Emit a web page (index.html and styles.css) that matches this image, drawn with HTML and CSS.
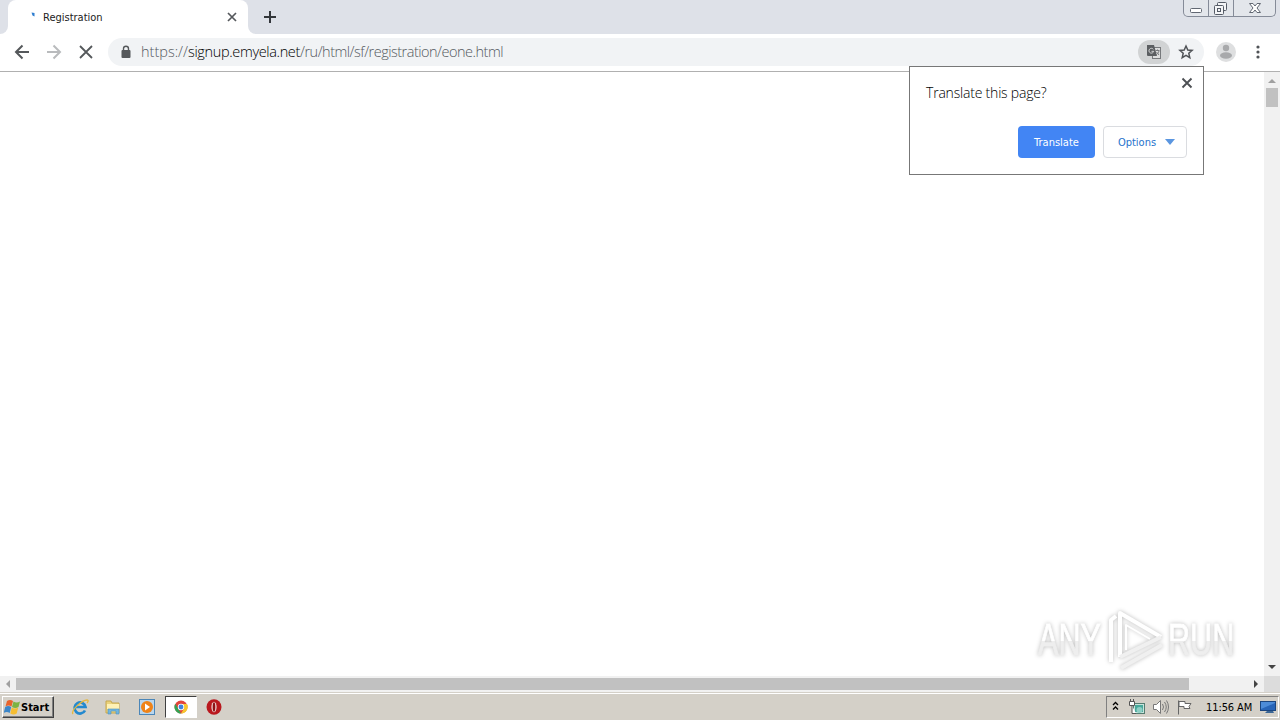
FILE: index.html
```html
<!DOCTYPE html>
<html>
<head>
  <meta charset="utf-8">
  <title>Registration</title>
  <link rel="stylesheet" href="styles.css">
</head>
<body>
  <div class="tabs">
    <div class="tab-edge"><div class="curve left"></div></div>
    <div class="tab">
      <svg class="spinner" width="16" height="16"><path d="M7.500 3.500l3 .5v3.500l-2-1z" fill="#2f7ed0"/></svg>
      <span class="tab-title">Registration</span>
      <svg width="16" height="16" stroke="#55585c" stroke-width="1.700"><path d="M4 4l8 8M12 4l-8 8"/></svg>
    </div>
    <div class="tab-edge"><div class="curve"></div></div>
    <svg class="new-tab" width="16" height="16" stroke="#33363b" stroke-width="2"><path d="M8 2v12M2 8h12"/></svg>
    <div class="win-btns">
      <svg width="24" height="16" fill="#fff" stroke="#626873"><rect x="6.500" y="8.500" width="11" height="4" rx="1"/></svg>
      <svg width="24" height="16" fill="#f4f5f7" stroke="#555b66"><rect x="8.500" y="2.500" width="9" height="8" rx="1"/><rect x="5.500" y="5.500" width="9" height="9" rx="1"/><rect x="8.500" y="8.500" width="3" height="3"/></svg>
      <svg width="41" height="16" fill="#fff" stroke="#626873"><path d="M15.500 3.500H19l2 2.500 2-2.500h3.500L23 8l3.500 4.500H23L21 10l-2 2.500h-3.500L19 8z"/></svg>
    </div>
  </div>

  <div class="toolbar">
    <svg width="32" height="32" fill="none" stroke="#55585b" stroke-width="2"><path d="M29 16H16M22.500 9.500L16 16l6.500 6.500"/></svg>
    <svg width="32" height="32" fill="none" stroke="#b9bbbd" stroke-width="2"><path d="M15 16h13M21.500 9.500L28 16l-6.500 6.500"/></svg>
    <svg width="32" height="32" fill="none" stroke="#55585b" stroke-width="1.800"><path d="M16 10l12 12M28 10L16 22"/></svg>
    <div class="address">
      <svg class="lock" width="12" height="14"><rect x="1.500" y="5" width="9" height="8" rx="1" fill="#55585b"/><path d="M3.500 6V3.700a2.500 2.500 0 0 1 5 0V6" fill="none" stroke="#55585b" stroke-width="1.400"/></svg>
      <div class="url"><span class="scheme">https://</span><span class="host">signup.emyela.net</span><span class="path">/ru/html/sf/registration/eone.html</span></div>
      <div class="translate-icon">
        <svg width="16" height="16"><rect x="6.500" y="3.500" width="8" height="11" fill="#dcdddd" stroke="#77797c"/><path d="M1 1h7l3 11H2a1 1 0 0 1-1-1z" fill="#5b5e61"/><path d="M7.300 5.300a2.400 2.400 0 1 0 .4 2H5.500" fill="none" stroke="#d5d6d7"/><path d="M9.500 6.500h4M11.500 5.500v1M13 7c-.5 2-1.500 3-3 4M10.500 8l2.500 3" fill="none" stroke="#77797c"/></svg>
      </div>
      <svg class="star" width="16" height="16" fill="none" stroke="#505357" stroke-width="1.500"><path d="M8 2l1.800 4 4.300.4-3.300 2.900 1 4.300L8 11.300l-3.800 2.300 1-4.300L1.900 6.400 6.200 6z"/></svg>
    </div>
    <svg class="avatar" width="20" height="20"><circle cx="10" cy="10" r="10" fill="#dedfe0"/><circle cx="10" cy="6" r="3.200" fill="#a8a9ab"/><ellipse cx="10" cy="13.500" rx="6" ry="3.300" fill="#a8a9ab"/></svg>
    <svg class="dots" width="4" height="14" fill="#505357"><circle cx="2" cy="2" r="1.600"/><circle cx="2" cy="7" r="1.600"/><circle cx="2" cy="12" r="1.600"/></svg>
  </div>

  <div class="content">
    <div class="page"></div>
    <div class="vscroll">
      <svg width="16" height="16"><path d="M4 11l4-4 4 4z" fill="#a0a0a0"/></svg>
      <div class="vthumb"></div>
      <svg class="down" width="16" height="16"><path d="M4 5h8l-4 4z" fill="#444"/></svg>
    </div>
  </div>
  <div class="hscroll">
    <svg width="16" height="16"><path d="M10 4v8L6 8z" fill="#a0a0a0"/></svg>
    <div class="hthumb"></div>
    <svg class="right" width="16" height="16"><path d="M6 4v8l4-4z" fill="#444"/></svg>
    <div class="corner"></div>
  </div>

  <div class="taskbar">
    <div class="start">
      <svg width="17" height="17"><path d="M3 2q3-2 6 0L7.500 7.500q-3-2-6 0z" fill="#e8632b"/><path d="M9.500 2.500q3 2 6.500 0L14.500 8q-3 2-6.500 0z" fill="#7cb342"/><path d="M1.200 8q3-2 6 0L5.700 14q-3-2-6 0z" fill="#3c86c8"/><path d="M7.800 8.500q3 2 6.400 0l-1.500 6q-3 2-6.400 0z" fill="#f5bd31"/></svg>
      <span>Start</span>
    </div>
    <div class="launch ie">
      <svg width="18" height="18" fill="none"><path d="M14 12.500a5.500 5.500 0 1 1 .5-3.500H5" stroke="#2389cf" stroke-width="2.700"/><path d="M2 16C-1 13 11 2 16 2c2 0 1 2 0 3" stroke="#e7b83c" stroke-width="1.300"/></svg>
    </div>
    <div class="launch">
      <svg width="18" height="18"><path d="M2 3h5l1 2h7v10H2z" fill="#ead27c" stroke="#c6a74e"/><path d="M3 6h12v5H3z" fill="#fff1b5"/><path d="M4 16v-5h11v5h-3v-3H7v3z" fill="#72b6df" stroke="#4b91bf" stroke-width=".6"/></svg>
    </div>
    <div class="launch">
      <svg width="18" height="18"><rect x="1.500" y="1.500" width="15" height="15" fill="#b9d6ed" stroke="#4b86b8"/><circle cx="9" cy="9" r="6" fill="#ef8318"/><path d="M7 5.500l5 3.500-5 3.500z" fill="#fff"/></svg>
    </div>
    <div class="launch active">
      <svg width="14" height="14"><circle cx="7" cy="7" r="6.500" fill="#e2453b"/><path d="M1.300 3.800L7 13.500A6.500 6.500 0 0 1 1.300 3.800z" fill="#31a354"/><path d="M7 13.500l3-5L7 4h6a6.500 6.500 0 0 1-6 9.500z" fill="#f6c72e"/><circle cx="7" cy="7" r="3.200" fill="#fff"/><circle cx="7" cy="7" r="2.400" fill="#3e82df"/></svg>
    </div>
    <div class="launch opera">
      <svg width="16" height="16"><ellipse cx="8" cy="8" rx="7.500" ry="7.800" fill="#b9181e"/><ellipse cx="8" cy="8" rx="2.600" ry="5.300" fill="#eed6d4"/><ellipse cx="8" cy="8" rx="1.300" ry="4.700" fill="#8e1116"/></svg>
    </div>
    <div class="tray">
      <svg class="chevron" width="7" height="10" fill="none" stroke="#000" stroke-width="1.300"><path d="M1 4l2.500-2.500L6 4M1 8.500L3.500 6 6 8.500"/></svg>
      <svg class="net" width="18" height="18"><rect x="5.500" y="5.500" width="11" height="10" fill="#c8e4dc" stroke="#547c70"/><rect x="7" y="7" width="8" height="7" fill="#48a99b"/><path d="M1.500 3.500h5v4h-5zM4 7.500v8h4M2.500 1v2M5.500 1v2" fill="#fff" stroke="#555"/><circle cx="11.500" cy="12" r="3" fill="#8fcfc5"/></svg>
      <svg class="sound" width="18" height="16" fill="none" stroke="#777"><path d="M1.500 5.500h3l4-4v13l-4-4h-3z" fill="#fff"/><path d="M10.500 5q2 3 0 6M12.500 3q3.500 5 0 10M14.500 1.500q4 6.500 0 13"/></svg>
      <svg class="flag" width="17" height="16" fill="#fff" stroke="#666"><path d="M2.500 15.500v-14M3 2.500h6v2h6l-2 3 1 2H8v-2H3z"/></svg>
      <span class="clock">11:56 AM</span>
      <svg class="desktop" width="16" height="14"><rect x=".5" y="1.500" width="15" height="9" fill="#2865b8" stroke="#1c467f"/><path d="M1 9L15 3V2H1z" fill="#4d8cd8"/><path d="M5 13h9l-1-2H7z" fill="#3b6695"/></svg>
    </div>
  </div>

  <div class="bubble">
    <svg class="bubble-close" width="12" height="12" stroke="#4d5054" stroke-width="1.900"><path d="M1.500 1.500l9 9M10.500 1.500l-9 9"/></svg>
    <div class="bubble-title">Translate this page?</div>
    <div class="bubble-btns">
      <div class="btn primary">Translate</div>
      <div class="btn options"><span>Options</span><svg width="10" height="6"><path d="M0 0h10L5 6z" fill="#5a96e0"/></svg></div>
    </div>
  </div>

  <div class="watermark">
    <span>ANY</span>
    <svg width="58" height="64" fill="none" stroke="#fff" stroke-width="4" stroke-linejoin="round">
      <path d="M5 54V12l5-4M14 49V5l41 24"/>
      <path d="M14 49l41-20M15 60l41-23" stroke="#f0f0f0"/>
      <path d="M20 42V17l24 14" stroke-width="2"/>
    </svg>
    <span class="run">RUN</span>
  </div>
</body>
</html>
```
FILE: styles.css
```css
body {
  margin: 0;
  width: 1280px;
  height: 720px;
  overflow: hidden;
  display: flex;
  flex-direction: column;
  background: #fff;
  font-family: "DejaVu Sans Condensed", "DejaVu Sans", sans-serif;
  font-stretch: condensed;
  font-size: 11px;
  color: #222;
}
svg {
  display: block;
  flex-shrink: 0;
}
.tabs {
  height: 34px;
  flex-shrink: 0;
  display: flex;
  background: #dee1e8;
}
.tab-edge {
  width: 8px;
  align-self: flex-end;
  background: #fff;
}
.curve {
  height: 8px;
  background: #dee1e8;
  border-bottom-left-radius: 8px;
}
.curve.left {
  border-radius: 0 0 8px 0;
}
.tab {
  width: 216px;
  padding: 0 8px 0 16px;
  display: flex;
  align-items: center;
  background: #fff;
  border-radius: 8px 8px 0 0;
}
.tab-title {
  flex: 1;
  margin-left: 3px;
}
.new-tab {
  margin: 9px 0 0 6px;
}
.win-btns {
  height: 16px;
  margin: 0 4px 0 auto;
  display: flex;
  border: 1px solid #858b98;
  border-top: 0;
  border-radius: 0 0 5px 5px;
  background: #e3e6eb;
}
.win-btns svg + svg {
  border-left: 1px solid #858b98;
}
.toolbar {
  height: 37px;
  flex-shrink: 0;
  display: flex;
  align-items: center;
  border-bottom: 1px solid #b0b0b0;
}
.toolbar > * {
  margin-bottom: 1px;
}
.address {
  width: 1096px;
  height: 28px;
  margin-left: 12px;
  display: flex;
  align-items: center;
  border-radius: 14px;
  background: #f1f3f5;
}
.lock {
  margin-left: 12px;
}
.url {
  flex: 1;
  margin: 0 0 2px 9px;
  font-family: "Open Sans", "Noto Sans", sans-serif;
  font-stretch: normal;
  font-weight: 300;
  font-size: 14.500px;
  white-space: nowrap;
  color: #555a5f;
}
.host {
  color: #000;
  letter-spacing: -0.350px;
}
.path {
  letter-spacing: -0.500px;
}
.translate-icon {
  width: 32px;
  height: 24px;
  display: flex;
  align-items: center;
  justify-content: center;
  border-radius: 12px;
  background: #d1d3d4;
}
.star {
  margin: 0 10px 0 8px;
}
.avatar {
  margin-left: 12px;
}
.dots {
  margin-left: 20px;
}
.content {
  flex: 1;
  display: flex;
}
.page {
  flex: 1;
}
.vscroll {
  width: 16px;
  display: flex;
  flex-direction: column;
  background: #f1f1f1;
}
.vthumb {
  width: 12px;
  height: 19px;
  margin: 0 2px;
  background: #c1c1c1;
}
.down {
  margin-top: auto;
}
.hscroll {
  height: 16px;
  display: flex;
  background: #f1f1f1;
}
.hthumb {
  width: 1173px;
  height: 12px;
  margin-top: 2px;
  background: #c1c1c1;
}
.right {
  margin-left: auto;
}
.corner {
  width: 16px;
  background: #dcdcdc;
}
.taskbar {
  height: 27px;
  flex-shrink: 0;
  display: flex;
  align-items: center;
  border-top: 1px solid #d4d0c8;
  box-shadow: inset 0 1px #fff;
  background: #d4d0c8;
}
.start {
  width: 50px;
  height: 20px;
  margin: 1px 0 0 2px;
  display: flex;
  align-items: center;
  border: 1px solid;
  border-color: #fff #404040 #404040 #fff;
  box-shadow: inset -1px -1px #808080;
  font-weight: bold;
  color: #000;
}
.start svg {
  margin-left: 1px;
}
.launch {
  width: 33.500px;
  height: 22px;
  margin-top: 1px;
  display: flex;
  align-items: center;
  justify-content: center;
}
.ie {
  margin-left: 9px;
}
.active {
  width: 30px;
  height: 20px;
  margin-left: 1px;
  border: 1px solid;
  border-color: #404040 #fff #fff #404040;
  background: #fff;
}
.opera {
  margin-left: 1px;
}
.tray {
  width: 171px;
  height: 20px;
  margin: 1px 1px 0 auto;
  display: flex;
  align-items: center;
  border: 1px solid;
  border-color: #808080 #fff #fff #808080;
  color: #000;
}
.chevron {
  margin: 0 0 3px 5px;
}
.net {
  margin-left: 9px;
}
.sound {
  margin-left: 6px;
}
.flag {
  margin-left: 6px;
}
.clock {
  margin-left: 13px;
  letter-spacing: -0.100px;
  white-space: nowrap;
}
.desktop {
  margin: 0 2px 0 auto;
}
.bubble {
  position: absolute;
  left: 909px;
  top: 66px;
  width: 293px;
  height: 107px;
  border: 1px solid #777;
  background: #fff;
}
.bubble-close {
  position: absolute;
  right: 10px;
  top: 10px;
}
.bubble-title {
  margin: 16px 0 0 16px;
  font-family: "Open Sans", "Noto Sans", sans-serif;
  font-stretch: normal;
  font-weight: 300;
  font-size: 14px;
  line-height: 20px;
  letter-spacing: -0.200px;
  color: #000;
}
.bubble-btns {
  margin: 23px 16px 0 0;
  display: flex;
  justify-content: flex-end;
  gap: 8px;
}
.btn {
  box-sizing: border-box;
  height: 32px;
  display: flex;
  align-items: center;
  justify-content: center;
  border-radius: 4px;
}
.primary {
  width: 77px;
  background: #4285f4;
  color: #fff;
}
.options {
  width: 84px;
  padding-left: 3px;
  gap: 9px;
  border: 1px solid #dadce0;
  color: #2673cc;
}
.watermark {
  position: absolute;
  left: 1038px;
  top: 608px;
  width: 200px;
  height: 64px;
  display: flex;
  align-items: center;
  font-family: "Liberation Sans", sans-serif;
  font-stretch: normal;
  font-size: 45px;
  color: #fff;
  filter: drop-shadow(0 0 2px #bbb);
}
.watermark span {
  width: 68px;
  transform: scaleX(0.680);
  transform-origin: 0 50%;
  -webkit-text-stroke: 1px transparent;
  background: linear-gradient(#fff 52%, #eee 52%);
  background-clip: text;
  -webkit-background-clip: text;
  color: transparent;
  flex-shrink: 0;
}
.watermark span {
  width: 100px;
  margin-right: -32px;
}
.watermark .run {
  margin-left: 4px;
}
```
